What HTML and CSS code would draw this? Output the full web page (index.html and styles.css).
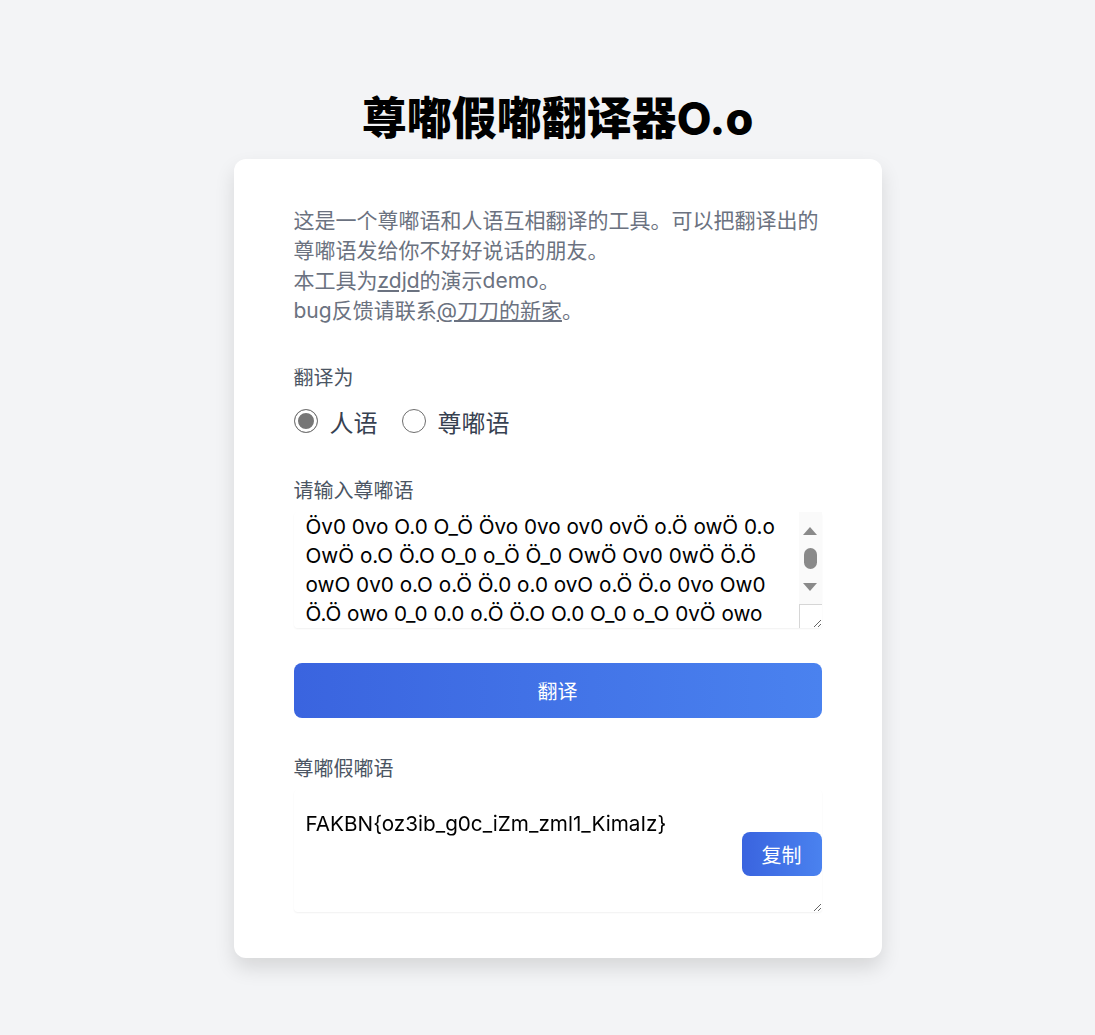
FILE: index.html
```html
<!DOCTYPE html>
<html lang="zh-CN">
<head>
    <meta charset="UTF-8">
    <title>尊嘟假嘟翻译器</title>
    <link rel="stylesheet" href="styles.css">
</head>
<body>
    <h1 class="title">尊嘟假嘟翻译器O.o</h1>
    <div class="card">
        <p class="intro">
            这是一个尊嘟语和人语互相翻译的工具。可以把翻译出的尊嘟语发给你不好好说话的朋友。<br>
            本工具为<a href="#">zdjd</a>的演示demo。<br>
            bug反馈请联系<a href="#">@刀刀的新家</a>。
        </p>

        <div class="field">
            <label class="label">翻译为</label>
            <div class="radios">
                <label class="radio"><input type="radio" name="to" checked> 人语</label>
                <label class="radio"><input type="radio" name="to"> 尊嘟语</label>
            </div>
        </div>

        <div class="field">
            <label class="label">请输入尊嘟语</label>
            <div class="input-wrap">
                <textarea class="box input" spellcheck="false">Öv0 0vo O.0 O_Ö Övo 0vo ov0 ovÖ o.Ö owÖ 0.o OwÖ o.O Ö.O O_0 o_Ö Ö_0 OwÖ Ov0 0wÖ Ö.Ö owO 0v0 o.O o.Ö Ö.0 o.0 ovO o.Ö Ö.o 0vo Ow0 Ö.Ö owo 0_0 0.0 o.Ö Ö.O O.0 O_0 o_O 0vÖ owo Ö.o Ov0 0_Ö o.O Ö_o ovÖ 0.O Ö.0 owo O_o 0v0 OwÖ o.O Ö.O O_0 o_Ö Ö_0 OwÖ Ov0 0wÖ Ö.Ö owO 0v0 o.O o.Ö Ö.0 o.0 ovO o.Ö Ö.o 0vo Ow0 Ö.Ö owo 0_0 0.0 o.Ö Ö.O O.0 O_0 o_O 0vÖ owo</textarea>
                <div class="scroll">
                    <span class="arrow up"></span>
                    <span class="thumb"></span>
                    <span class="arrow down"></span>
                    <span class="corner"></span>
                </div>
            </div>
        </div>

        <button class="btn" type="button">翻译</button>

        <div class="field last">
            <label class="label">尊嘟假嘟语</label>
            <div class="result">
                <textarea class="box output" readonly>FAKBN{oz3ib_g0c_iZm_zml1_KimaIz}</textarea>
                <button class="copy" type="button">复制</button>
            </div>
        </div>
    </div>
</body>
</html>
```

FILE: styles.css
```css
body {
    margin: 0;
    padding-left: 20px;
    background: #f3f4f6;
    font-family: Inter, "Noto Sans CJK SC", sans-serif;
    color: #111;
}
.title {
    margin: 0;
    padding-top: 90px;
    text-align: center;
    font-size: 45px;
    line-height: 58px;
    font-weight: 800;
    color: #000;
}
.card {
    width: 528px;
    margin: 11px auto 76px;
    padding: 47px 60px 46px;
    background: #fff;
    border-radius: 12px;
    box-shadow: 0 10px 20px rgba(0, 0, 0, 0.12);
}
.intro {
    margin: 0 0 37px;
    font-size: 21px;
    line-height: 30px;
    color: #6b7280;
}
.intro a {
    color: #6b7280;
}
.field {
    margin-bottom: 35px;
}
.field.last {
    margin-bottom: 0;
}
.label {
    display: block;
    font-size: 20px;
    line-height: 30px;
    color: #4b5563;
}
.radios {
    display: flex;
    gap: 24px;
    margin-top: 13px;
    margin-bottom: 40px;
}
.radio {
    display: flex;
    align-items: center;
    gap: 12px;
    height: 30px;
    font-size: 24px;
    color: #374151;
}
.radio input {
    appearance: none;
    box-sizing: border-box;
    width: 24px;
    height: 24px;
    margin: 0;
    border: 1.5px solid #6e6e6e;
    border-radius: 50%;
    background: #fff;
}
.radio input:checked {
    border-color: #767676;
    box-shadow: inset 0 0 0 3px #fff;
    background: #767676;
}
.box {
    display: block;
    box-sizing: border-box;
    width: 100%;
    border: none;
    outline: none;
    font-family: Inter, "Noto Sans CJK SC", sans-serif;
    font-size: 20.7px;
    line-height: 29px;
    color: #000;
    box-shadow: 0 1px 2px rgba(0, 0, 0, 0.06);
    border-radius: 4px;
}
.input-wrap {
    position: relative;
    margin-top: 6px;
}
.input {
    height: 116px;
    padding: 0 34px 0 12px;
}

/* fake classic scrollbar, sits over the textarea's right edge */
.scroll {
    position: absolute;
    top: 0;
    right: 0;
    bottom: 0;
    width: 23px;
    display: flex;
    flex-direction: column;
    align-items: center;
    padding-top: 15px;
    box-sizing: border-box;
    background: linear-gradient(#fafafa, #fafafa) 0 0 / 100% 92px no-repeat;
}
.arrow {
    width: 0;
    height: 0;
    border-left: 7px solid transparent;
    border-right: 7px solid transparent;
}
.arrow.up {
    border-bottom: 8px solid #8a8a8a;
}
.arrow.down {
    margin-top: 14px;
    border-top: 8px solid #8a8a8a;
}
.thumb {
    width: 13px;
    height: 21px;
    margin-top: 13px;
    border-radius: 7px;
    background: #8a8a8a;
}
.corner {
    margin-top: auto;
    width: 23px;
    height: 24px;
    box-sizing: border-box;
    border-top: 1px solid #d6d6d6;
    border-left: 1px solid #d6d6d6;
}

.btn {
    display: block;
    width: 100%;
    height: 55px;
    margin: 0 0 36px;
    border: none;
    border-radius: 8px;
    background: linear-gradient(90deg, #3a64df, #4a82ef);
    color: #fff;
    font-size: 20px;
    font-family: Inter, "Noto Sans CJK SC", sans-serif;
}
.result {
    position: relative;
    margin-top: 6px;
}
.output {
    height: 122px;
    padding: 19px 12px;
}
.copy {
    position: absolute;
    right: 0;
    top: 42px;
    width: 80px;
    height: 44px;
    border: none;
    border-radius: 8px;
    background: linear-gradient(90deg, #3a64df, #4a82ef);
    color: #fff;
    font-size: 20px;
    font-family: Inter, "Noto Sans CJK SC", sans-serif;
}
```
